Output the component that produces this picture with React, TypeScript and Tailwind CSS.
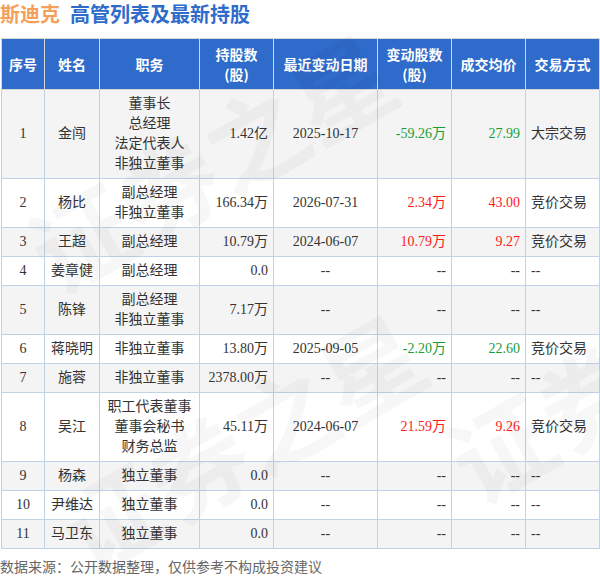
import React from "react";

type Row = {
  no: number;
  name: string;
  roles: string[];
  shares: string;
  date: string;
  change: string;
  price: string;
  tone: "up" | "down" | "none";
  method: string;
};

const rows: Row[] = [
  { no: 1, name: "金闯", roles: ["董事长", "总经理", "法定代表人", "非独立董事"], shares: "1.42亿", date: "2025-10-17", change: "-59.26万", price: "27.99", tone: "down", method: "大宗交易" },
  { no: 2, name: "杨比", roles: ["副总经理", "非独立董事"], shares: "166.34万", date: "2026-07-31", change: "2.34万", price: "43.00", tone: "up", method: "竞价交易" },
  { no: 3, name: "王超", roles: ["副总经理"], shares: "10.79万", date: "2024-06-07", change: "10.79万", price: "9.27", tone: "up", method: "竞价交易" },
  { no: 4, name: "姜章健", roles: ["副总经理"], shares: "0.0", date: "--", change: "--", price: "--", tone: "none", method: "--" },
  { no: 5, name: "陈锋", roles: ["副总经理", "非独立董事"], shares: "7.17万", date: "--", change: "--", price: "--", tone: "none", method: "--" },
  { no: 6, name: "蒋晓明", roles: ["非独立董事"], shares: "13.80万", date: "2025-09-05", change: "-2.20万", price: "22.60", tone: "down", method: "竞价交易" },
  { no: 7, name: "施蓉", roles: ["非独立董事"], shares: "2378.00万", date: "--", change: "--", price: "--", tone: "none", method: "--" },
  { no: 8, name: "吴江", roles: ["职工代表董事", "董事会秘书", "财务总监"], shares: "45.11万", date: "2024-06-07", change: "21.59万", price: "9.26", tone: "up", method: "竞价交易" },
  { no: 9, name: "杨森", roles: ["独立董事"], shares: "0.0", date: "--", change: "--", price: "--", tone: "none", method: "--" },
  { no: 10, name: "尹维达", roles: ["独立董事"], shares: "0.0", date: "--", change: "--", price: "--", tone: "none", method: "--" },
  { no: 11, name: "马卫东", roles: ["独立董事"], shares: "0.0", date: "--", change: "--", price: "--", tone: "none", method: "--" },
];

const toneClass = (tone: Row["tone"]) =>
  tone === "up" ? "text-[#ff1a1a]" : tone === "down" ? "text-[#16a037]" : "text-[#333333]";

const th = "border border-[#d6d6d6] bg-[#2f6bca] px-1 py-[5px] text-center font-bold text-white";
const td = "border border-[#bfd2e6] px-[5px] py-1 align-middle";

export default function App() {
  return (
    <div
      className="relative h-[579px] w-[600px] overflow-hidden bg-white text-[14px] leading-[20px] text-[#333333]"
      style={{ fontFamily: '"Liberation Serif", "Noto Sans CJK SC", serif' }}
    >
      <div
        className="flex h-[28px] items-center gap-[10px] text-[20px] font-bold leading-[28px]"
        style={{ fontFamily: '"Noto Sans CJK SC", sans-serif' }}
      >
        <span className="text-[#f5a05a]">斯迪克</span>
        <span className="text-[#2f6bca]">高管列表及最新持股</span>
      </div>

      <table className="mt-[10px] ml-px w-[598px] table-fixed border-collapse">
        <colgroup>
          <col className="w-[43px]" />
          <col className="w-[55px]" />
          <col className="w-[100px]" />
          <col className="w-[74px]" />
          <col className="w-[104px]" />
          <col className="w-[74px]" />
          <col className="w-[74px]" />
          <col className="w-[74px]" />
        </colgroup>
        <thead style={{ fontFamily: '"Noto Sans CJK SC", sans-serif' }}>
          <tr>
            <th className={th}>序号</th>
            <th className={th}>姓名</th>
            <th className={th}>职务</th>
            <th className={th}>持股数<br />(股)</th>
            <th className={th}>最近变动日期</th>
            <th className={th}>变动股数<br />(股)</th>
            <th className={th}>成交均价</th>
            <th className={th}>交易方式</th>
          </tr>
        </thead>
        <tbody>
          {rows.map((r) => (
            <tr key={r.no} className={r.no % 2 === 1 ? "bg-[#f4f4f4]" : "bg-white"}>
              <td className={`${td} text-center`}>{r.no}</td>
              <td className={`${td} text-center`}>{r.name}</td>
              <td className={`${td} text-center`}>
                {r.roles.map((role) => (
                  <div key={role} className="h-[20px] leading-[20px]">{role}</div>
                ))}
              </td>
              <td className={`${td} text-right`}>{r.shares}</td>
              <td className={`${td} text-center`}>{r.date}</td>
              <td className={`${td} text-right ${toneClass(r.tone)}`}>{r.change}</td>
              <td className={`${td} text-right ${toneClass(r.tone)}`}>{r.price}</td>
              <td className={`${td} text-left`}>{r.method}</td>
            </tr>
          ))}
        </tbody>
      </table>

      <div
        className="mt-[7px] text-[14px] leading-[20px] text-[#666666]"
        style={{ fontFamily: '"Noto Sans CJK SC", sans-serif' }}
      >
        数据来源：公开数据整理，仅供参考不构成投资建议
      </div>

      {/* watermark */}
      <div
        className="pointer-events-none absolute inset-0 select-none text-[100px] font-bold leading-none text-black/[0.03]"
        style={{ fontFamily: '"Noto Sans CJK SC", sans-serif' }}
      >
        <span className="absolute left-[10px] top-[110px] -rotate-[30deg] whitespace-nowrap">证券之星</span>
        <span className="absolute left-[40px] top-[390px] -rotate-[30deg] whitespace-nowrap">证券之星</span>
        <span className="absolute left-[430px] top-[320px] -rotate-[30deg] whitespace-nowrap">证券之星</span>
      </div>
    </div>
  );
}
